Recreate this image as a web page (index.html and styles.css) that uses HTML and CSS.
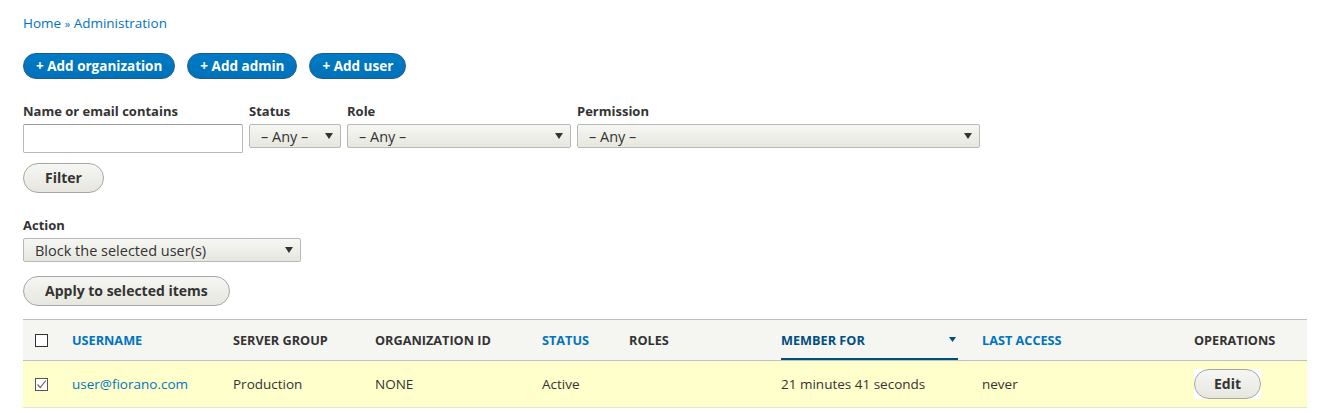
FILE: index.html
```html
<!DOCTYPE html>
<html lang="en">
<head>
  <meta charset="UTF-8">
  <title>People | Administration</title>
  <meta name="viewport" content="width=device-width, initial-scale=1.0">
  <link rel="stylesheet" href="styles.css">
</head>
<body>

  <div class="page">

    <!-- BREADCRUMB -->
    <nav class="breadcrumb">
      <a href="#">Home</a> <span class="sep">»</span> <a href="#">Administration</a>
    </nav>

    <!-- ACTION LINKS -->
    <ul class="action-links">
      <li><a href="#" class="button button--primary">+ Add organization</a></li>
      <li><a href="#" class="button button--primary">+ Add admin</a></li>
      <li><a href="#" class="button button--primary">+ Add user</a></li>
    </ul>

    <!-- EXPOSED FILTERS -->
    <form class="filters">
      <div class="filter-row">
        <div class="form-item">
          <label for="user">Name or email contains</label>
          <input type="text" id="user" class="form-text name-input">
        </div>
        <div class="form-item">
          <label for="status">Status</label>
          <div class="select-wrap status-select">
            <select id="status"><option>&ndash; Any &ndash;</option></select>
          </div>
        </div>
        <div class="form-item">
          <label for="role">Role</label>
          <div class="select-wrap role-select">
            <select id="role"><option>&ndash; Any &ndash;</option></select>
          </div>
        </div>
        <div class="form-item">
          <label for="permission">Permission</label>
          <div class="select-wrap permission-select">
            <select id="permission"><option>&ndash; Any &ndash;</option></select>
          </div>
        </div>
      </div>
      <button type="button" class="button">Filter</button>
    </form>

    <!-- BULK OPERATIONS -->
    <form class="bulk-form">
      <div class="form-item">
        <label for="action">Action</label>
        <div class="select-wrap action-select">
          <select id="action"><option>Block the selected user(s)</option></select>
        </div>
      </div>
      <button type="button" class="button">Apply to selected items</button>
    </form>

    <!-- USERS TABLE -->
    <table class="users">
      <thead>
        <tr>
          <th class="select-all"><span class="checkbox"></span></th>
          <th class="col-name"><a href="#">Username</a></th>
          <th class="col-group">Server group</th>
          <th class="col-org">Organization ID</th>
          <th class="col-status"><a href="#">Status</a></th>
          <th class="col-roles">Roles</th>
          <th class="col-member is-active">
            <a href="#">Member for
              <svg class="sort-icon" width="7" height="5" viewBox="0 0 7 5"><path d="M0 0h7L3.5 5z" fill="#004f80"/></svg>
            </a>
          </th>
          <th class="col-access"><a href="#">Last access</a></th>
          <th class="col-ops">Operations</th>
        </tr>
      </thead>
      <tbody>
        <tr class="selected">
          <td class="select-all">
            <span class="checkbox is-checked">
              <svg width="11" height="11" viewBox="0 0 11 11"><path d="M1.5 5.5l2.8 3L9.8 1.5" fill="none" stroke="#666" stroke-width="1.2"/></svg>
            </span>
          </td>
          <td><a href="#">user@fiorano.com</a></td>
          <td>Production</td>
          <td>NONE</td>
          <td>Active</td>
          <td></td>
          <td>21 minutes 41 seconds</td>
          <td>never</td>
          <td><span class="ops"><a href="#" class="button">Edit</a></span></td>
        </tr>
      </tbody>
    </table>

  </div>

</body>
</html>
```

FILE: styles.css
```css
* {
  box-sizing: border-box;
  margin: 0;
  padding: 0;
}

body {
  font-family: "Open Sans", "Noto Sans", sans-serif;
  font-size: 13px;
  color: #333;
  background: #fff;
}

a {
  color: #0074bd;
  text-decoration: none;
}

.page {
  padding: 14px 27px 0 23px;
}

/* breadcrumb */
.breadcrumb {
  font-size: 13.5px;
  line-height: 18px;
}

.breadcrumb .sep {
  color: #0074bd;
  font-size: 11px;
}

/* buttons */
.button {
  display: inline-block;
  font-family: inherit;
  font-size: 14px;
  font-weight: bold;
  color: #333;
  line-height: 20px;
  padding: 4px 21px;
  border: 1px solid #a6a6a6;
  border-radius: 20em;
  background: linear-gradient(to bottom, #f6f6f3, #e7e7df);
  cursor: pointer;
}

.button--primary {
  font-size: 13.5px;
  color: #fff;
  background: linear-gradient(to bottom, #007bc6, #0071b8);
  border-color: #1e5c90;
  padding: 2px 12px;
  line-height: 20px;
}

.action-links {
  list-style: none;
  display: flex;
  gap: 12px;
  margin-top: 20px;
}

/* form items */
.form-item label {
  display: block;
  font-weight: bold;
  font-size: 13px;
  line-height: 18px;
  margin-bottom: 4px;
}

.filters {
  margin-top: 23px;
}

.filter-row {
  display: flex;
  gap: 6px;
  margin-bottom: 10px;
}

.form-text {
  display: block;
  height: 29px;
  border: 1px solid #b8b8b8;
  border-top-color: #999;
  border-radius: 2px;
  background: #fff;
  font-family: inherit;
  font-size: 13px;
  padding: 4px 6px;
}

.name-input {
  width: 220px;
}

.select-wrap {
  position: relative;
  height: 24px;
}

.select-wrap select {
  appearance: none;
  -webkit-appearance: none;
  width: 100%;
  height: 100%;
  border: 1px solid #b8b8b8;
  border-radius: 2px;
  background: linear-gradient(to bottom, #f6f6f3, #e7e7df);
  font-family: inherit;
  font-size: 14.5px;
  color: #333;
  padding: 0 24px 0 11px;
}

.select-wrap::after {
  content: "";
  position: absolute;
  right: 8px;
  top: 9px;
  border-left: 4.5px solid transparent;
  border-right: 4.5px solid transparent;
  border-top: 6px solid #333;
  pointer-events: none;
}

.status-select { width: 92px; }
.role-select { width: 224px; }
.permission-select { width: 403px; }
.action-select { width: 278px; }

.bulk-form {
  margin-top: 23px;
}

.bulk-form .form-item {
  margin-bottom: 14px;
}

/* users table */
.users {
  width: 100%;
  margin-top: 13px;
  border-collapse: collapse;
  table-layout: fixed;
}

.users thead tr {
  border-top: 1px solid #bfbfbf;
  border-bottom: 1px solid #bfbfbf;
  background: #f5f5f2;
}

.users th {
  text-align: left;
  text-transform: uppercase;
  font-size: 12.7px;
  font-weight: bold;
  padding: 0 12px;
  height: 41px;
  white-space: nowrap;
}

.users th.is-active {
  padding-bottom: 0;
  vertical-align: bottom;
}

.users th.is-active a {
  display: flex;
  justify-content: space-between;
  align-items: center;
  color: #004f80;
  height: 39px;
  border-bottom: 2px solid #004f80;
  padding-right: 2px;
}

.users td {
  padding: 0 12px;
  height: 47px;
  font-size: 13.5px;
  border-bottom: 1px solid #e6e4df;
}

.users tr.selected td {
  background: #ffffcc;
}

.users .select-all {
  width: 37px;
  padding: 0 0 0 12px;
}

.col-name { width: 161px; }
.col-group { width: 142px; }
.col-org { width: 167px; }
.col-status { width: 87px; }
.col-roles { width: 152px; }
.col-member { width: 201px; }
.col-access { width: 212px; }

/* the edit link keeps its own white box on the highlighted row */
.ops {
  display: inline-block;
  background: #fff;
  vertical-align: middle;
}

.ops .button {
  display: block;
  padding: 4px 19px;
}

.checkbox {
  display: block;
  width: 13px;
  height: 13px;
  border: 1px solid #333;
  background: #fff;
}

.checkbox svg {
  display: block;
}

.is-checked {
  border-color: #555;
}
```
